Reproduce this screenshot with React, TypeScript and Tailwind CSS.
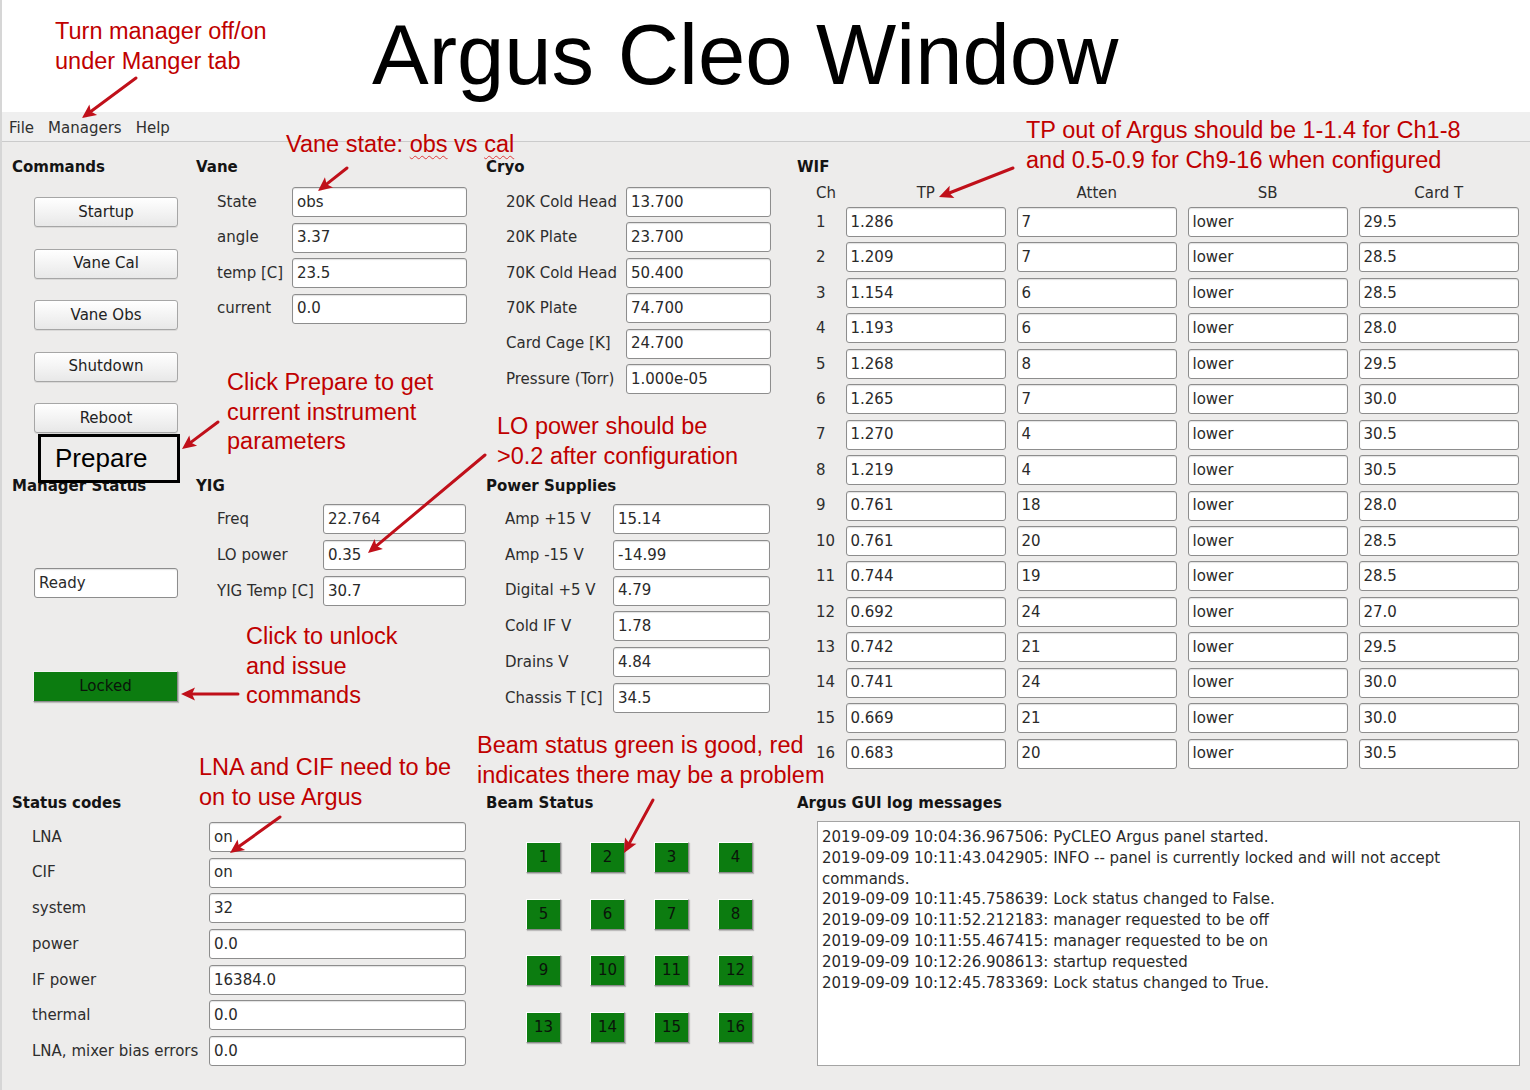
import React from "react";

const GUI = "font-['DejaVu_Sans',sans-serif] text-[15px]";
const NOTE = "font-['Liberation_Sans',Arial,sans-serif] text-[23.5px] leading-[29.5px] text-[#c00000]";

function Header({ children }: { children: React.ReactNode }) {
	return <div className="h-[18px] whitespace-nowrap pt-[1px] text-[15px] font-bold leading-[18px] text-[#141414]">{children}</div>;
}

function Field({ value, className = "" }: { value: string; className?: string }) {
	return (
		<div
			className={`flex h-[30px] items-center overflow-hidden whitespace-nowrap rounded-[3px] border border-[#8d8d8d] bg-white pl-[4px] text-[#2a2a2a] shadow-[inset_0_1px_1px_rgba(0,0,0,0.12)] ${className}`}
		>
			{value}
		</div>
	);
}

function Row({
	label,
	value,
	labelW,
	fieldW,
}: {
	label: string;
	value: string;
	labelW: string;
	fieldW: string;
}) {
	return (
		<div className="flex items-center">
			<div className={`whitespace-nowrap text-[#2e2e2e] ${labelW}`}>{label}</div>
			<Field value={value} className={fieldW} />
		</div>
	);
}

function Btn({ label }: { label: string }) {
	return (
		<div className="flex h-[30px] w-[144px] items-center justify-center rounded-[3px] border border-[#a6a6a6] bg-linear-to-b from-[#ffffff] to-[#e8e8e8] text-[#222] shadow-[0_1px_0_rgba(0,0,0,0.08)]">
			{label}
		</div>
	);
}

function Arrow({ x1, y1, x2, y2 }: { x1: number; y1: number; x2: number; y2: number }) {
	const dx = x2 - x1;
	const dy = y2 - y1;
	const len = Math.hypot(dx, dy);
	const ux = dx / len;
	const uy = dy / len;
	const hl = 14;
	const hw = 6.5;
	const bx = x2 - ux * hl;
	const by = y2 - uy * hl;
	const px = -uy;
	const py = ux;
	const nx = bx + ux * 3;
	const ny = by + uy * 3;
	const pts = `${x2},${y2} ${bx + px * hw},${by + py * hw} ${nx},${ny} ${bx - px * hw},${by - py * hw}`;
	return (
		<g>
			<line x1={x1} y1={y1} x2={nx} y2={ny} stroke="#c0101a" strokeWidth={3} strokeLinecap="round" />
			<polygon points={pts} fill="#c0101a" />
		</g>
	);
}

const cryo = [
	["20K Cold Head", "13.700"],
	["20K Plate", "23.700"],
	["70K Cold Head", "50.400"],
	["70K Plate", "74.700"],
	["Card Cage [K]", "24.700"],
	["Pressure (Torr)", "1.000e-05"],
];

const vane = [
	["State", "obs"],
	["angle", "3.37"],
	["temp [C]", "23.5"],
	["current", "0.0"],
];

const yig = [
	["Freq", "22.764"],
	["LO power", "0.35"],
	["YIG Temp [C]", "30.7"],
];

const power = [
	["Amp +15 V", "15.14"],
	["Amp -15 V", "-14.99"],
	["Digital +5 V", "4.79"],
	["Cold IF V", "1.78"],
	["Drains V", "4.84"],
	["Chassis T [C]", "34.5"],
];

const status = [
	["LNA", "on"],
	["CIF", "on"],
	["system", "32"],
	["power", "0.0"],
	["IF power", "16384.0"],
	["thermal", "0.0"],
	["LNA, mixer bias errors", "0.0"],
];

const wif = [
	["1.286", "7", "29.5"],
	["1.209", "7", "28.5"],
	["1.154", "6", "28.5"],
	["1.193", "6", "28.0"],
	["1.268", "8", "29.5"],
	["1.265", "7", "30.0"],
	["1.270", "4", "30.5"],
	["1.219", "4", "30.5"],
	["0.761", "18", "28.0"],
	["0.761", "20", "28.5"],
	["0.744", "19", "28.5"],
	["0.692", "24", "27.0"],
	["0.742", "21", "29.5"],
	["0.741", "24", "30.0"],
	["0.669", "21", "30.0"],
	["0.683", "20", "30.5"],
];

const log = [
	"2019-09-09 10:04:36.967506: PyCLEO Argus panel started.",
	"2019-09-09 10:11:43.042905: INFO -- panel is currently locked and will not accept",
	"commands.",
	"2019-09-09 10:11:45.758639: Lock status changed to False.",
	"2019-09-09 10:11:52.212183: manager requested to be off",
	"2019-09-09 10:11:55.467415: manager requested to be on",
	"2019-09-09 10:12:26.908613: startup requested",
	"2019-09-09 10:12:45.783369: Lock status changed to True.",
];

export default function App() {
	return (
		<div className="relative h-[1090px] w-[1530px] overflow-hidden bg-white">
			{/* slide title */}
			<div className="h-[112px] pl-[372px] pt-[12px] font-['Liberation_Sans',Arial,sans-serif] text-[85px] leading-none text-black">
				Argus Cleo Window
			</div>

			<div className={GUI}>
				{/* menu bar */}
				<div className="flex h-[30px] items-center border-b border-[#cbcbcb] bg-[#efefef] pl-[2px] pt-[3px] text-[#303030]">
					<span className="px-[7px]">File</span>
					<span className="px-[7px]">Managers</span>
					<span className="px-[7px]">Help</span>
				</div>

				<div className="flex h-[948px] bg-[#edeceb]">
					{/* left part */}
					<div className="flex w-[790px] flex-col">
						<div className="flex h-[334px] pt-[15px]">
							<div className="w-[196px] pl-[12px]">
								<Header>Commands</Header>
								<div className="ml-[22px] mt-[22px] flex flex-col gap-[21.5px]">
									<Btn label="Startup" />
									<Btn label="Vane Cal" />
									<Btn label="Vane Obs" />
									<Btn label="Shutdown" />
									<Btn label="Reboot" />
								</div>
							</div>
							<div className="w-[290px]">
								<Header>Vane</Header>
								<div className="mt-[12px] flex flex-col gap-[5.5px] pl-[21px]">
									{vane.map(([l, v]) => (
										<Row key={l} label={l} value={v} labelW="w-[75px]" fieldW="w-[175px]" />
									))}
								</div>
							</div>
							<div className="w-[304px]">
								<Header>Cryo</Header>
								<div className="mt-[12px] flex flex-col gap-[5.4px] pl-[20px]">
									{cryo.map(([l, v]) => (
										<Row key={l} label={l} value={v} labelW="w-[120px]" fieldW="w-[145px]" />
									))}
								</div>
							</div>
						</div>

						<div className="flex h-[317px]">
							<div className="w-[196px] pl-[12px]">
								<Header>Manager Status</Header>
								<Field value="Ready" className="ml-[22px] mt-[74px] w-[144px]" />
								<div className="ml-[21px] mt-[73px] flex h-[31px] w-[145px] items-center justify-center border border-b-[#8c8c8c] border-l-[#f4f4f4] border-r-[#8c8c8c] border-t-[#f4f4f4] bg-[#0c7c10] text-[#0a140a] shadow-[1px_1px_1px_rgba(0,0,0,0.2)]">
									Locked
								</div>
							</div>
							<div className="w-[290px]">
								<Header>YIG</Header>
								<div className="mt-[10px] flex flex-col gap-[6px] pl-[21px]">
									{yig.map(([l, v]) => (
										<Row key={l} label={l} value={v} labelW="w-[106px]" fieldW="w-[143px]" />
									))}
								</div>
							</div>
							<div className="w-[304px]">
								<Header>Power Supplies</Header>
								<div className="mt-[10px] flex flex-col gap-[5.8px] pl-[19px]">
									{power.map(([l, v]) => (
										<Row key={l} label={l} value={v} labelW="w-[108px]" fieldW="w-[157px]" />
									))}
								</div>
							</div>
						</div>

						<div className="flex flex-1">
							<div className="w-[486px] pl-[12px]">
								<Header>Status codes</Header>
								<div className="mt-[11px] flex flex-col gap-[5.7px] pl-[20px]">
									{status.map(([l, v]) => (
										<Row key={l} label={l} value={v} labelW="w-[177px]" fieldW="w-[257px]" />
									))}
								</div>
							</div>
							<div className="w-[304px]">
								<Header>Beam Status</Header>
								<div className="ml-[40px] mt-[31px] grid grid-cols-[35px_35px_35px_35px] gap-x-[29px] gap-y-[25.5px]">
									{Array.from({ length: 16 }, (_, i) => (
										<div
											key={i}
											className="flex h-[31px] items-center justify-center border border-b-[#8a8a8a] border-l-white border-r-[#8a8a8a] border-t-white bg-[#0c7c10] text-[#0a140a] shadow-[1px_1px_1px_rgba(0,0,0,0.2)]"
										>
											{i + 1}
										</div>
									))}
								</div>
							</div>
						</div>
					</div>

					{/* right part */}
					<div className="flex flex-1 flex-col pl-[7px] pr-[10px]">
						<div className="h-[651px] pt-[15px]">
							<Header>WIF</Header>
							<div className="ml-[19px] mt-[8px] grid h-[18px] grid-cols-[19px_160.5px_160.5px_160.5px_160.5px] gap-x-[10.5px] pt-[1px] leading-[18px] text-[#2e2e2e]">
								<div>Ch</div>
								<div className="text-center">TP</div>
								<div className="text-center">Atten</div>
								<div className="text-center">SB</div>
								<div className="text-center">Card T</div>
							</div>
							<div className="ml-[19px] mt-[6px] grid grid-cols-[19px_160.5px_160.5px_160.5px_160.5px] items-center gap-x-[10.5px] gap-y-[5.45px]">
								{wif.map(([tp, at, ct], i) => (
									<React.Fragment key={i}>
										<div className="whitespace-nowrap text-[#2e2e2e]">{i + 1}</div>
										<Field value={tp} />
										<Field value={at} />
										<Field value="lower" />
										<Field value={ct} />
									</React.Fragment>
								))}
							</div>
						</div>
						<Header>Argus GUI log messages</Header>
						<div className="ml-[20px] mt-[10px] h-[245px] border border-[#a4a4a4] bg-white pl-[4px] pt-[5px] leading-[20.8px] text-[#2a2a2a]">
							{log.map((l, i) => (
								<div key={i} className="whitespace-nowrap">
									{l}
								</div>
							))}
						</div>
					</div>
				</div>
			</div>

			{/* left edge line */}
			<div className="absolute left-0 top-0 h-full w-[2px] bg-[#d6d6d6]" />

			{/* annotations */}
			<div className="absolute left-[38px] top-[434px] h-[49px] w-[142px] border-[3px] border-black bg-[#edeceb] pl-[14px] font-['Liberation_Sans',Arial,sans-serif] text-[26px] leading-[43px] text-black">
				Prepare
			</div>

			<div className={`absolute left-[55px] top-[17px] ${NOTE}`}>
				<div>Turn manager off/on</div>
				<div>under Manger tab</div>
			</div>
			<div className={`absolute left-[286px] top-[130px] whitespace-nowrap ${NOTE}`}>
				Vane state:{" "}
				<span className="underline decoration-[#e03a3a] decoration-wavy decoration-1 underline-offset-[3px]">obs</span> vs{" "}
				<span className="underline decoration-[#e03a3a] decoration-wavy decoration-1 underline-offset-[3px]">cal</span>
			</div>
			<div className={`absolute left-[1026px] top-[116px] whitespace-nowrap ${NOTE}`}>
				<div>TP out of Argus should be 1-1.4 for Ch1-8</div>
				<div>and 0.5-0.9 for Ch9-16 when configured</div>
			</div>
			<div className={`absolute left-[227px] top-[368px] whitespace-nowrap ${NOTE}`}>
				<div>Click Prepare to get</div>
				<div>current instrument</div>
				<div>parameters</div>
			</div>
			<div className={`absolute left-[497px] top-[412px] whitespace-nowrap ${NOTE}`}>
				<div>LO power should be</div>
				<div>&gt;0.2 after configuration</div>
			</div>
			<div className={`absolute left-[246px] top-[622px] whitespace-nowrap ${NOTE}`}>
				<div>Click to unlock</div>
				<div>and issue</div>
				<div>commands</div>
			</div>
			<div className={`absolute left-[477px] top-[731px] whitespace-nowrap ${NOTE}`}>
				<div>Beam status green is good, red</div>
				<div>indicates there may be a problem</div>
			</div>
			<div className={`absolute left-[199px] top-[753px] whitespace-nowrap ${NOTE}`}>
				<div>LNA and CIF need to be</div>
				<div>on to use Argus</div>
			</div>

			<svg className="pointer-events-none absolute left-0 top-0" width={1530} height={1090}>
				<Arrow x1={136} y1={78} x2={82} y2={118} />
				<Arrow x1={347} y1={168} x2={318} y2={191} />
				<Arrow x1={1013} y1={168} x2={939} y2={197} />
				<Arrow x1={218} y1={422} x2={182} y2={449} />
				<Arrow x1={485} y1={455} x2={368} y2={553} />
				<Arrow x1={238} y1={694} x2={181} y2={694} />
				<Arrow x1={280} y1={817} x2={230} y2={853} />
				<Arrow x1={653} y1={800} x2={624} y2={853} />
			</svg>
		</div>
	);
}
